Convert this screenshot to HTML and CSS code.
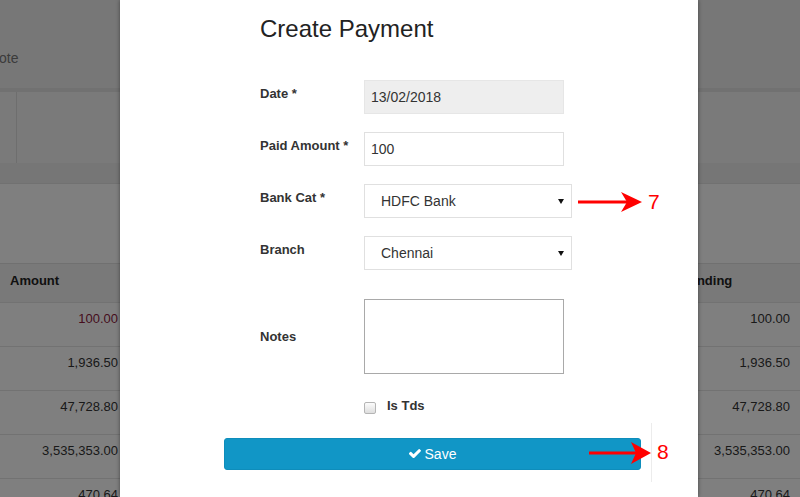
FILE: index.html
```
<!DOCTYPE html>
<html lang="en">
<head>
  <meta charset="UTF-8">
  <meta name="viewport" content="width=device-width, initial-scale=1.0">
  <title>Create Payment</title>
  <link rel="stylesheet" href="styles.css">
</head>
<body>
  <div class="page">
    <div class="page-top"><span class="crumb">ote</span></div>
    <div class="page-band"></div>
    <div class="page-tools">
      <div class="tool-cell"></div>
      <div class="tool-cell wide"></div>
    </div>
    <div class="page-band2"></div>
    <div class="page-gap"></div>
    <table class="grid">
      <thead>
        <tr><th class="c-amt">Amount</th><th class="c-mid"></th><th class="c-pend">Pending</th></tr>
      </thead>
      <tbody>
        <tr><td class="c-amt num red">100.00</td><td></td><td class="c-pend num">100.00</td></tr>
        <tr><td class="c-amt num">1,936.50</td><td></td><td class="c-pend num">1,936.50</td></tr>
        <tr><td class="c-amt num">47,728.80</td><td></td><td class="c-pend num">47,728.80</td></tr>
        <tr><td class="c-amt num">3,535,353.00</td><td></td><td class="c-pend num">3,535,353.00</td></tr>
        <tr><td class="c-amt num">470.64</td><td></td><td class="c-pend num">470.64</td></tr>
      </tbody>
    </table>
  </div>

  <div class="backdrop"></div>

  <div class="modal">
    <div class="modal-body">
      <h2 class="modal-title">Create Payment</h2>
      <form class="pay-form">
        <div class="form-row">
          <label for="payDate">Date *</label>
          <input type="text" id="payDate" class="field readonly" value="13/02/2018" readonly>
        </div>
        <div class="form-row">
          <label for="paidAmount">Paid Amount *</label>
          <input type="text" id="paidAmount" class="field" value="100">
        </div>
        <div class="form-row">
          <label>Bank Cat *</label>
          <div class="select"><span>HDFC Bank</span><i class="caret"></i></div>
        </div>
        <div class="form-row">
          <label>Branch</label>
          <div class="select"><span>Chennai</span><i class="caret"></i></div>
        </div>
        <div class="form-row notes-row">
          <label for="notes">Notes</label>
          <textarea id="notes" class="notes"></textarea>
        </div>
        <div class="check-row">
          <input type="checkbox" id="isTds">
          <label for="isTds">Is Tds</label>
        </div>
        <button type="button" class="btn-save">
          <svg class="check" viewBox="128 400 1543 1030" width="12" height="9" aria-hidden="true">
            <path fill="#fff" d="M1671 566q0 40-28 68l-724 724-136 136q-28 28-68 28t-68-28l-136-136-362-362q-28-28-28-68t28-68l136-136q28-28 68-28t68 28l294 295 656-657q28-28 68-28t68 28l136 136q28 28 28 68z"/>
          </svg>
          Save
        </button>
      </form>
    </div>
    <div class="rule"></div>
  </div>

  <!-- step markers drawn over the screenshot -->
  <svg class="arrow arrow-7" width="68" height="24" viewBox="0 0 68 24">
    <line x1="2" y1="12" x2="52" y2="12" stroke="#f00" stroke-width="3"/>
    <polygon fill="#f00" points="66,12 45,2 51,12 45,22"/>
  </svg>
  <span class="step step-7">7</span>

  <svg class="arrow arrow-8" width="66" height="24" viewBox="0 0 66 24">
    <line x1="2" y1="12" x2="50" y2="12" stroke="#f00" stroke-width="3"/>
    <polygon fill="#f00" points="64,12 44,1 49,12 44,23"/>
  </svg>
  <span class="step step-8">8</span>
</body>
</html>
```

FILE: styles.css
```
body {
  margin: 0;
  height: 497px;
  overflow: hidden;
  position: relative;
  font-family: "Liberation Sans", Arial, sans-serif;
  color: #333;
  background: #fff;
}

/* page behind the dialog */
.page-top {
  height: 88px;
  box-sizing: border-box;
  padding-top: 50px;
  background: #eee;
}
.crumb {
  display: block;
  margin-left: -1px;
  font-size: 14px;
  line-height: 16px;
  color: #777;
}
.page-band {
  height: 4px;
  background: #e2e2e2;
}
.page-tools {
  height: 71px;
  display: flex;
  background: #f4f4f4;
}
.tool-cell {
  width: 16px;
  border-right: 1px solid #dcdcdc;
}
.tool-cell.wide {
  flex: 1;
  border-right: none;
}
.page-band2 {
  height: 20px;
  background: #ececec;
  border-bottom: 1px solid #e2e2e2;
}
.page-gap {
  height: 79px;
}
.grid {
  width: 100%;
  border-collapse: collapse;
  table-layout: fixed;
  font-size: 13px;
  line-height: 18px;
}
.grid th {
  text-align: left;
  font-weight: bold;
  background: #f2f2f2;
  border-top: 1px solid #e0e0e0;
  padding: 8px 10px 12px;
  color: #222;
}
.grid td {
  border-top: 1px solid #e4e4e4;
  padding: 7px 10px 18px;
  color: #333;
}
.grid .num {
  text-align: right;
}
.c-amt {
  width: 108px;
}
.c-pend {
  width: 109px;
}
.grid td.red {
  color: #8c1a3c;
}

.backdrop {
  position: absolute;
  top: 0;
  left: 0;
  right: 0;
  bottom: 0;
  background: rgba(0, 0, 0, 0.5);
}

/* dialog */
.modal {
  position: absolute;
  top: 0;
  left: 120px;
  width: 578px;
  height: 497px;
  background: #fff;
  box-shadow: 0 0 4px rgba(0, 0, 0, 0.45);
}
.modal-body {
  padding: 16px 57px 0 104px;
}
.modal-title {
  margin: 0 0 38px 36px;
  font-size: 24px;
  line-height: 26px;
  font-weight: normal;
  color: #222;
}
.form-row {
  display: grid;
  grid-template-columns: 104px auto;
  align-items: start;
  margin: 0 0 18px 36px;
}
.form-row label {
  padding-top: 5px;
  font-size: 13px;
  line-height: 18px;
  font-weight: bold;
  color: #333;
}
.field {
  width: 200px;
  height: 34px;
  box-sizing: border-box;
  border: 1px solid #e0e0e0;
  padding: 0 6px;
  font-family: inherit;
  font-size: 14px;
  color: #333;
  outline: none;
}
.field.readonly {
  background: #eee;
  border-color: #e6e6e6;
}
.select {
  width: 208px;
  height: 34px;
  box-sizing: border-box;
  border: 1px solid #e0e0e0;
  padding: 0 7px 0 16px;
  display: flex;
  align-items: center;
  justify-content: space-between;
  font-size: 14px;
  color: #333;
}
.caret {
  width: 0;
  height: 0;
  border-left: 3px solid transparent;
  border-right: 3px solid transparent;
  border-top: 5px solid #111;
}
.notes-row {
  margin-top: 29px;
  margin-bottom: 0;
  align-items: center;
}
.notes-row label {
  padding-top: 0;
}
.notes {
  display: block;
  width: 200px;
  height: 75px;
  box-sizing: border-box;
  border: 1px solid #a9a9a9;
  resize: none;
  margin: 0;
  font-family: inherit;
}
.check-row {
  display: flex;
  align-items: flex-start;
  margin: 23px 0 23px 140px;
}
.check-row input {
  -webkit-appearance: none;
  appearance: none;
  width: 12px;
  height: 12px;
  margin: 5px 11px 0 0;
  border: 1px solid #b5b5b5;
  border-radius: 2px;
  background: linear-gradient(#fcfcfc, #dedede);
}
.check-row label {
  font-size: 13px;
  line-height: 18px;
  font-weight: bold;
  color: #333;
}
.btn-save {
  width: 417px;
  height: 32px;
  display: flex;
  align-items: center;
  justify-content: center;
  gap: 4px;
  padding-bottom: 2px;
  border: 1px solid #0e8dbb;
  border-radius: 3px;
  background: #1196c6;
  color: #fff;
  font-family: inherit;
  font-size: 14px;
  cursor: pointer;
}
.rule {
  position: absolute;
  left: 531px;
  top: 423px;
  width: 1px;
  height: 59px;
  background: #ececec;
}

/* annotations */
.arrow {
  position: absolute;
}
.arrow-7 {
  left: 576px;
  top: 190px;
}
.arrow-8 {
  left: 587px;
  top: 441px;
}
.step {
  position: absolute;
  font-size: 21px;
  line-height: 21px;
  color: #f00;
}
.step-7 {
  left: 648px;
  top: 191px;
}
.step-8 {
  left: 657px;
  top: 441px;
}
```
